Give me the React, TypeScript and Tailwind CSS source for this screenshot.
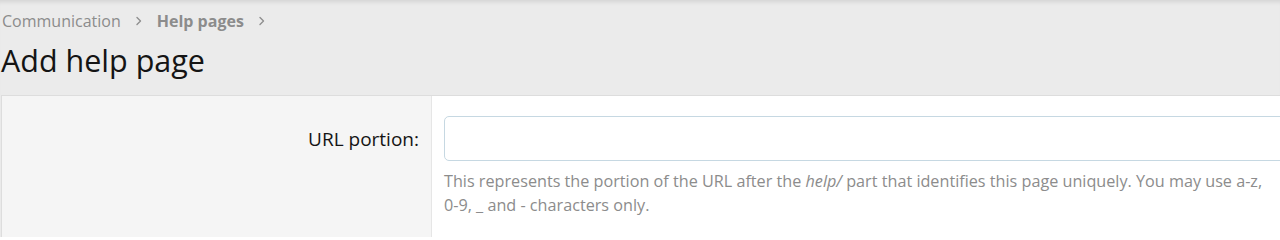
import React from "react";

function Chevron() {
  return (
    <svg width="8" height="10" viewBox="0 0 8 10" className="mx-[14px]" fill="none">
      <path d="M2 1.5 L5.5 5 L2 8.5" stroke="#8f8f8f" strokeWidth="1.4" strokeLinecap="round" strokeLinejoin="round" />
    </svg>
  );
}

export default function App() {
  return (
    <div className="w-[1280px] h-[237px] overflow-hidden bg-[#ebebeb] shadow-[inset_0_5px_4px_-3px_rgba(0,0,0,0.1)] font-['Segoe_UI','Open_Sans',sans-serif]">
      {/* breadcrumb */}
      <div className="flex items-center pl-[2px] pt-[8px] h-[34px] text-[16px] text-[#8c8c8c]">
        <span>Communication</span>
        <Chevron />
        <span className="font-bold">Help pages</span>
        <Chevron />
      </div>

      <h1 className="pl-[1px] mt-[6px] text-[30.5px] leading-[40px] text-[#141414]">Add help page</h1>

      {/* form */}
      <div className="mt-[15px] ml-[1px] w-[1320px] flex border-t border-l border-[#dddddd] bg-white">
        <div className="w-[429px] shrink-0 bg-[#f5f5f5] pt-[29px] pr-[12px] text-right text-[19px] text-[#141414]">
          URL portion:
        </div>
        <div className="flex-1 border-l border-[#e6e6e6] pl-[12px] pt-[20px] pb-[20px]">
          <input
            type="text"
            className="block w-full h-[45px] rounded-[5px] border border-[#c6d8e2] bg-white outline-none"
          />
          <p className="mt-[8px] w-[860px] text-[16.2px] leading-[24px] text-[#8c8c8c]">
            This represents the portion of the URL after the <i>help/</i> part that identifies this page uniquely. You may use a-z,
            <br />
            0-9, _ and - characters only.
          </p>
        </div>
      </div>
    </div>
  );
}
